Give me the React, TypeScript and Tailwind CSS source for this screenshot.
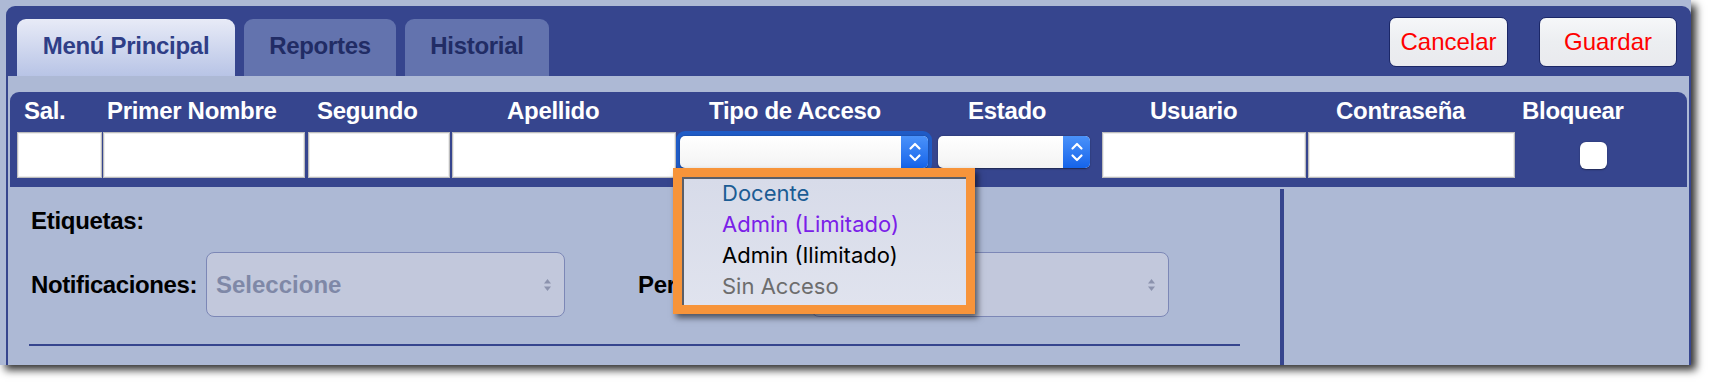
import React from "react";

const NAVY = "bg-[#36458e]";

function Stepper() {
  return (
    <div className="w-[27px] h-full rounded-r-[5px] bg-gradient-to-b from-[#4a92fa] to-[#1463ea] flex items-center justify-center">
      <svg width="14" height="22" viewBox="0 0 14 22" fill="none">
        <path d="M2.5 7.5 L7 3 L11.5 7.5" stroke="white" strokeWidth="2.2" strokeLinecap="round" strokeLinejoin="round" />
        <path d="M2.5 14.5 L7 19 L11.5 14.5" stroke="white" strokeWidth="2.2" strokeLinecap="round" strokeLinejoin="round" />
      </svg>
    </div>
  );
}

function MacSelect({ className }: { className: string }) {
  return (
    <div className={`flex rounded-[5px] bg-gradient-to-b from-white to-[#f3f3f3] shadow-[0_0.5px_1.5px_rgba(0,0,0,0.45)] ${className}`}>
      <div className="flex-1" />
      <Stepper />
    </div>
  );
}

function UpDown() {
  return (
    <svg width="9" height="14" viewBox="0 0 9 14">
      <path d="M4.5 1 L8 5.5 L1 5.5 Z" fill="#8b92ad" />
      <path d="M4.5 13 L8 8.5 L1 8.5 Z" fill="#8b92ad" />
    </svg>
  );
}

function FakeSelect({ text, w }: { text?: string; w: string }) {
  return (
    <div className={`${w} h-[65px] rounded-[8px] border-[1.5px] border-[#7c87b6] bg-[#c2c8dc] flex items-center pl-[9px] pr-[12px]`}>
      <span className="flex-1 text-[24px] font-bold text-[#7f88a7] leading-[28px]">{text}</span>
      <UpDown />
    </div>
  );
}

export default function App() {
  const input = "h-[46px] bg-white border border-[#bdbdbd] shadow-[inset_0_0_0_1px_#ececec]";
  return (
    <div
      className="relative w-[1716px] h-[386px] bg-white overflow-hidden"
      style={{ fontFamily: '"Liberation Sans", Arial, Helvetica, sans-serif' }}
    >
      {/* window */}
      <div className="w-[1691px] h-[365px] bg-[#adb9d5] shadow-[5px_5px_8px_rgba(0,0,0,0.8)] pt-[6px] pl-[6px] flex flex-col">
        {/* header */}
        <div className={`h-[70px] ${NAVY} rounded-t-[9px] flex items-end pl-[11px] pr-[14px]`}>
          <div className="flex items-end gap-[9px]">
            <div className="w-[218px] h-[57px] rounded-t-[9px] bg-gradient-to-b from-[#e8ebf7] to-[#b8c4e6] flex justify-center pt-[13px]">
              <span className="text-[24px] font-bold leading-[28px] tracking-[-0.3px] text-[#2f3e87]">Menú Principal</span>
            </div>
            <div className="w-[152px] h-[57px] rounded-t-[9px] bg-[#6373ae] flex justify-center pt-[13px]">
              <span className="text-[24px] font-bold leading-[28px] tracking-[-0.3px] text-[#212c65]">Reportes</span>
            </div>
            <div className="w-[144px] h-[57px] rounded-t-[9px] bg-[#6373ae] flex justify-center pt-[13px]">
              <span className="text-[24px] font-bold leading-[28px] tracking-[-0.3px] text-[#212c65]">Historial</span>
            </div>
          </div>
          <div className="flex-1" />
          <div className="flex gap-[31px] self-start mt-[11px]">
            <button className="w-[119px] h-[50px] rounded-[7px] border-[1.5px] border-[#1b2767] bg-gradient-to-b from-[#f6f7f9] via-[#eceef1] to-[#e9eaee] text-[#ff0000] text-[24px] leading-[28px]">
              Cancelar
            </button>
            <button className="w-[138px] h-[50px] rounded-[7px] border-[1.5px] border-[#1b2767] bg-gradient-to-b from-[#f6f7f9] via-[#eceef1] to-[#e9eaee] text-[#ff0000] text-[24px] leading-[28px]">
              Guardar
            </button>
          </div>
        </div>

        {/* body */}
        <div className="flex-1 border-x-[2px] border-[#36458e] flex flex-col">
          <div className="h-[16px]" />
          {/* fields panel */}
          <div className={`mx-[2px] ${NAVY} rounded-t-[9px] pt-[5px] pb-[9px]`}>
            <div className="grid grid-cols-[83px_210px_190px_202px_259px_182px_186px_186px_1fr] pl-[14px] text-white text-[24px] font-bold leading-[28px] tracking-[-0.3px]">
              <span>Sal.</span>
              <span>Primer Nombre</span>
              <span>Segundo</span>
              <span>Apellido</span>
              <span>Tipo de Acceso</span>
              <span>Estado</span>
              <span>Usuario</span>
              <span>Contraseña</span>
              <span>Bloquear</span>
            </div>
            <div className="flex items-start pl-[7px] mt-[7px]">
              <div className={`w-[85px] ${input}`} />
              <div className={`ml-[1px] w-[202px] ${input}`} />
              <div className={`ml-[3px] w-[142px] ${input}`} />
              <div className={`ml-[2px] w-[224px] ${input}`} />
              <div className="w-[256px] h-[42px] -mt-[1px] rounded-[9px] bg-[#1f5bc6] p-[4px] pt-[5px]">
                <MacSelect className="w-full h-[32px]" />
              </div>
              <MacSelect className="ml-[6px] mt-[4px] w-[152px] h-[32px]" />
              <div className={`ml-[12px] w-[204px] ${input}`} />
              <div className={`ml-[2px] w-[207px] ${input}`} />
              <div className="ml-[65px] mt-[10px] w-[27px] h-[27px] rounded-[6px] bg-white shadow-[0_0.5px_1.5px_rgba(0,0,0,0.4)]" />
            </div>
          </div>

          {/* lower area */}
          <div className="flex-1 flex">
            <div className="w-[1272px] pl-[23px] pt-[20px]">
              <div className="text-[24px] font-bold leading-[28px] tracking-[-0.3px] text-black">Etiquetas:</div>
              <div className="flex mt-[17px]">
                <div className="w-[607px] flex items-center">
                  <span className="w-[175px] text-[24px] font-bold leading-[28px] tracking-[-0.4px] text-black whitespace-nowrap">Notificaciones:</span>
                  <FakeSelect text="Seleccione" w="w-[359px]" />
                </div>
                <div className="flex items-center">
                  <span className="w-[173px] text-[24px] font-bold leading-[28px] tracking-[-0.3px] text-black">Per</span>
                  <FakeSelect w="w-[358px]" />
                </div>
              </div>
              <div className="mt-[27px] -ml-[2px] w-[1211px] h-[2px] bg-[#36458e]" />
            </div>
            <div className="w-[3.5px] mt-[2px] bg-[#36458e]" />
            <div className="flex-1" />
          </div>
        </div>
      </div>

      {/* dropdown overlay */}
      <div className="absolute left-[673px] top-[168px] w-[302px] h-[146px] border-[9px] border-[#f7943a] shadow-[3px_4px_6px_rgba(0,0,0,0.55)]">
        <div
          className="w-full h-full border-l-[2px] border-t-[2px] border-[#5a5e68] bg-gradient-to-b from-[#d7dbe9] to-[#e0e3ee] pl-[38px] text-[22px] leading-[31px]"
          style={{ fontFamily: 'Inter, "Noto Sans", sans-serif' }}
        >
          <div className="-mt-[1px] text-[#1b5c94]">Docente</div>
          <div className="text-[#7a20e8]">Admin (Limitado)</div>
          <div className="text-black">Admin (Ilimitado)</div>
          <div className="text-[#6d6d6d]">Sin Acceso</div>
        </div>
      </div>
    </div>
  );
}
